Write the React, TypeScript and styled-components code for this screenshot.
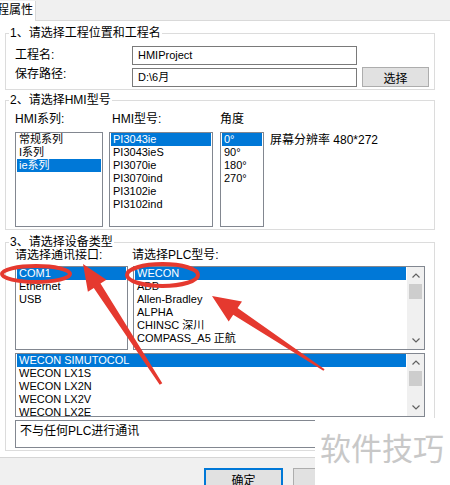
import React from "react";
import styled, { createGlobalStyle } from "styled-components";

const GlobalStyle = createGlobalStyle`
  html, body { margin: 0; padding: 0; background: #f0f0f0; }
  body {
    font-family: "Liberation Sans", "Noto Sans CJK SC", sans-serif;
    font-size: 12px;
    color: #000;
  }
`;

const Window = styled.div`
  position: relative;
  width: 450px;
  height: 485px;
  overflow: hidden;
  background: #f0f0f0;
`;

const TabStrip = styled.div`
  display: flex;
  height: 21px;
  box-sizing: border-box;
  border-bottom: 1px solid #d9d9d9;
  background: #f0f0f0;
`;

const Tab = styled.div`
  width: 35px;
  margin-top: 1px;
  margin-bottom: -1px;
  background: #fff;
  border-right: 1px solid #d9d9d9;
  overflow: hidden;
  white-space: nowrap;
  line-height: 19px;
  text-indent: -15px;
`;

const Panel = styled.div`
  background: #fff;
  padding: 12px 0 6px 5px;
  border-bottom: 1px solid #d5d5d5;
`;

const Group = styled.div<{ $mt?: number }>`
  position: relative;
  width: 430px;
  box-sizing: border-box;
  border: 1px solid #dcdcdc;
  margin-top: ${(p) => p.$mt ?? 0}px;
`;

const Legend = styled.span`
  position: absolute;
  top: -8px;
  left: 3px;
  padding: 0 1px;
  background: #fff;
  line-height: 14px;
  white-space: nowrap;
`;

const ProjectGrid = styled.div`
  display: grid;
  grid-template-columns: 117px 230px 67px;
  grid-template-rows: 19px 20px;
  row-gap: 2px;
  padding: 12px 9px 2px 9px;
`;

const FieldLabel = styled.div<{ $pt?: number }>`
  align-self: start;
  padding-top: ${(p) => p.$pt ?? 0}px;
  line-height: 14px;
`;

const TextInput = styled.div`
  width: 225px;
  height: 19px;
  box-sizing: border-box;
  border: 1px solid #7a7a7a;
  padding-left: 5px;
  font-size: 11px;
  line-height: 17px;
  align-self: end;
`;

const Button = styled.div<{ $default?: boolean; $w: number; $h: number }>`
  width: ${(p) => p.$w}px;
  height: ${(p) => p.$h}px;
  box-sizing: border-box;
  background: #e1e1e1;
  border: 1px solid ${(p) => (p.$default ? "#0078d7" : "#adadad")};
  box-shadow: ${(p) => (p.$default ? "inset 0 0 0 1px #0078d7" : "none")};
  display: flex;
  align-items: center;
  justify-content: center;
`;

const ModelGrid = styled.div`
  display: grid;
  grid-template-columns: 88px 105px 44px auto;
  grid-template-rows: 14px 95px;
  column-gap: 6px;
  row-gap: 6px;
  padding: 11px 9px 2px 9px;
`;

const ColLabel = styled.div<{ $ml?: number }>`
  line-height: 14px;
  margin-left: ${(p) => p.$ml ?? 0}px;
  white-space: nowrap;
`;

const Resolution = styled.div`
  align-self: start;
  padding-top: 1px;
  line-height: 14px;
  white-space: nowrap;
`;

const DeviceGrid = styled.div`
  display: grid;
  grid-template-columns: 113px 292px;
  column-gap: 5px;
  padding: 5px 9px 2px 9px;
`;

const DeviceLabel = styled.div<{ $ml?: number }>`
  line-height: 14px;
  margin-bottom: 4px;
  margin-left: ${(p) => p.$ml ?? 0}px;
  white-space: nowrap;
`;

const Wide = styled.div<{ $mt: number }>`
  grid-column: 1 / 3;
  margin-top: ${(p) => p.$mt}px;
`;

const ListBox = styled.div<{ $w: number; $h: number }>`
  width: ${(p) => p.$w}px;
  height: ${(p) => p.$h}px;
  box-sizing: border-box;
  border: 1px solid #828790;
  background: #fff;
  display: flex;
  overflow: hidden;
`;

const Items = styled.div`
  flex: 1;
  min-width: 0;
  padding: 0 1px;
  overflow: hidden;
`;

const Item = styled.div<{ $selected?: boolean }>`
  height: 13px;
  line-height: 13px;
  padding-left: 2px;
  font-size: 11px;
  white-space: nowrap;
  background: ${(p) => (p.$selected ? "#0078d7" : "transparent")};
  color: ${(p) => (p.$selected ? "#fff" : "#000")};
`;

const ScrollTrack = styled.div`
  width: 17px;
  background: #f0f0f0;
  display: flex;
  flex-direction: column;
  align-items: center;
`;

const ArrowCell = styled.div`
  height: 17px;
  width: 17px;
  display: flex;
  align-items: center;
  justify-content: center;
`;

const Thumb = styled.div`
  width: 13px;
  height: 15px;
  background: #cdcdcd;
`;

const Fill = styled.div`
  flex: 1;
`;

const Description = styled.div`
  height: 28px;
  box-sizing: border-box;
  border: 1px solid #828790;
  padding: 3px 0 0 4px;
  line-height: 14px;
`;

const Footer = styled.div`
  display: flex;
  gap: 10px;
  padding: 10px 0 0 204px;
`;

const Watermark = styled.div`
  position: absolute;
  left: 315px;
  top: 418px;
  width: 135px;
  height: 67px;
  box-sizing: border-box;
  background: #fff;
  padding: 16px 0 0 5px;
  font-size: 31px;
  line-height: 31px;
  color: #c8c8c8;
  white-space: nowrap;
`;

const Overlay = styled.svg`
  position: absolute;
  left: 0;
  top: 0;
  pointer-events: none;
`;

const Chevron = ({ up }: { up?: boolean }) => (
  <svg width="8" height="5" viewBox="0 0 8 5">
    <polyline
      points={up ? "0.5,4.5 4,1 7.5,4.5" : "0.5,0.5 4,4 7.5,0.5"}
      fill="none"
      stroke="#606060"
      strokeWidth="1.2"
    />
  </svg>
);

const Scrollbar = () => (
  <ScrollTrack>
    <ArrowCell>
      <Chevron up />
    </ArrowCell>
    <Thumb />
    <Fill />
    <ArrowCell>
      <Chevron />
    </ArrowCell>
  </ScrollTrack>
);

type ListProps = {
  w: number;
  h: number;
  items: string[];
  selected: number;
  scroll?: boolean;
};

const List = ({ w, h, items, selected, scroll }: ListProps) => (
  <ListBox $w={w} $h={h}>
    <Items>
      {items.map((it, i) => (
        <Item key={it} $selected={i === selected}>
          {it}
        </Item>
      ))}
    </Items>
    {scroll && <Scrollbar />}
  </ListBox>
);

function arrowPoints(
  x1: number,
  y1: number,
  x2: number,
  y2: number,
  headLen: number,
  headW: number,
  neckW: number,
  tailW: number
) {
  const dx = x2 - x1;
  const dy = y2 - y1;
  const len = Math.hypot(dx, dy);
  const ux = dx / len;
  const uy = dy / len;
  const nx = -uy;
  const ny = ux;
  const bx = x2 - ux * headLen;
  const by = y2 - uy * headLen;
  const pts = [
    [x1 + (nx * tailW) / 2, y1 + (ny * tailW) / 2],
    [bx + (nx * neckW) / 2, by + (ny * neckW) / 2],
    [bx + (nx * headW) / 2, by + (ny * headW) / 2],
    [x2, y2],
    [bx - (nx * headW) / 2, by - (ny * headW) / 2],
    [bx - (nx * neckW) / 2, by - (ny * neckW) / 2],
    [x1 - (nx * tailW) / 2, y1 - (ny * tailW) / 2],
  ];
  return pts.map((p) => p.map((v) => v.toFixed(1)).join(",")).join(" ");
}

const plcModels = ["WECON", "ABB", "Allen-Bradley", "ALPHA", "CHINSC 深川", "COMPASS_A5 正航"];
const protocols = ["WECON SIMUTOCOL", "WECON LX1S", "WECON LX2N", "WECON LX2V", "WECON LX2E"];

export default function App() {
  return (
    <>
      <GlobalStyle />
      <Window>
        <TabStrip>
          <Tab>工程属性</Tab>
        </TabStrip>
        <Panel>
          <Group>
            <Legend>1、请选择工程位置和工程名</Legend>
            <ProjectGrid>
              <FieldLabel $pt={2}>工程名:</FieldLabel>
              <TextInput>HMIProject</TextInput>
              <div />
              <FieldLabel>保存路径:</FieldLabel>
              <TextInput>D:\6月</TextInput>
              <Button $w={67} $h={20}>
                选择
              </Button>
            </ProjectGrid>
          </Group>

          <Group $mt={10}>
            <Legend>2、请选择HMI型号</Legend>
            <ModelGrid>
              <ColLabel>HMI系列:</ColLabel>
              <ColLabel $ml={3}>HMI型号:</ColLabel>
              <ColLabel>角度</ColLabel>
              <div />
              <List w={88} h={95} items={["常规系列", "I系列", "ie系列"]} selected={2} />
              <List
                w={104}
                h={95}
                items={["PI3043ie", "PI3043ieS", "PI3070ie", "PI3070ind", "PI3102ie", "PI3102ind"]}
                selected={0}
              />
              <List w={44} h={95} items={["0°", "90°", "180°", "270°"]} selected={0} />
              <Resolution>屏幕分辨率 480*272</Resolution>
            </ModelGrid>
          </Group>

          <Group $mt={12}>
            <Legend>3、请选择设备类型</Legend>
            <DeviceGrid>
              <div>
                <DeviceLabel>请选择通讯接口:</DeviceLabel>
                <List w={113} h={84} items={["COM1", "Ethernet", "USB"]} selected={0} />
              </div>
              <div>
                <DeviceLabel $ml={-1}>请选择PLC型号:</DeviceLabel>
                <List w={292} h={84} items={plcModels} selected={0} scroll />
              </div>
              <Wide $mt={3}>
                <List w={410} h={64} items={protocols} selected={0} scroll />
              </Wide>
              <Wide $mt={3}>
                <Description>不与任何PLC进行通讯</Description>
              </Wide>
            </DeviceGrid>
          </Group>
        </Panel>
        <Footer>
          <Button $default $w={79} $h={23}>
            确定
          </Button>
          <Button $w={79} $h={23}>
            取消
          </Button>
        </Footer>

        <Overlay width="450" height="485" viewBox="0 0 450 485">
          <ellipse cx="36" cy="274" rx="34" ry="8" fill="none" stroke="#e5392f" strokeWidth="4" />
          <ellipse cx="162.5" cy="275" rx="35.5" ry="11" fill="none" stroke="#e5392f" strokeWidth="4" />
          <polygon points={arrowPoints(161, 384, 83, 264, 26, 22, 8, 3)} fill="#e5392f" />
          <polygon points={arrowPoints(324, 370, 212, 296, 28, 24, 8, 2)} fill="#e5392f" />
        </Overlay>

        <Watermark>软件技巧</Watermark>
      </Window>
    </>
  );
}
